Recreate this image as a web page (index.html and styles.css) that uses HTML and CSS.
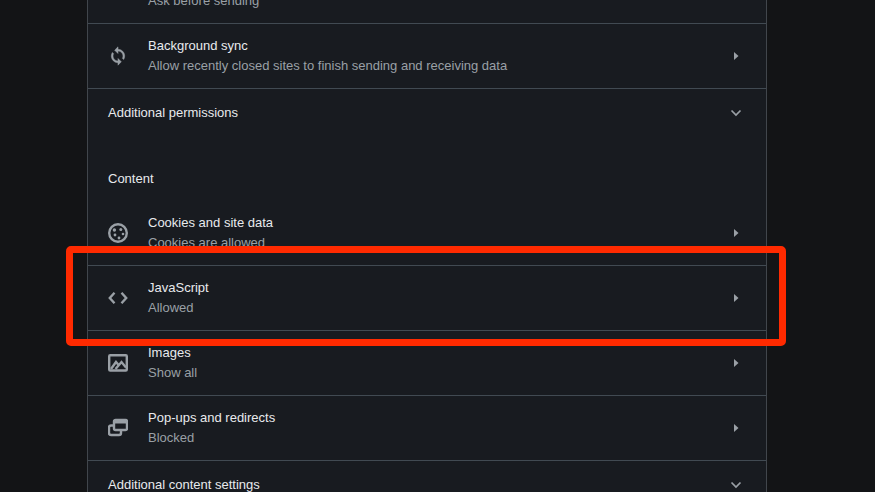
FILE: index.html
```html
<!DOCTYPE html>
<html lang="en">
<head>
    <meta charset="UTF-8">
    <meta name="viewport" content="width=device-width, initial-scale=1.0">
    <title>Site settings</title>
    <link rel="stylesheet" href="styles.css">
</head>
<body>
    <div class="panel">
        <div class="row">
            <span class="icon"></span>
            <div class="row-text">
                <div class="row-title">&nbsp;</div>
                <div class="row-sub">Ask before sending</div>
            </div>
        </div>

        <div class="row">
            <svg class="icon icon-sync" viewBox="0 0 24 24"><path d="M12 4V1L8 5l4 4V6c3.31 0 6 2.69 6 6 0 1.01-.25 1.97-.7 2.8l1.46 1.46C19.54 15.03 20 13.57 20 12c0-4.42-3.58-8-8-8zm0 14c-3.31 0-6-2.69-6-6 0-1.01.25-1.97.7-2.8L5.24 7.74C4.46 8.97 4 10.43 4 12c0 4.42 3.58 8 8 8v3l4-4-4-4v3z"/></svg>
            <div class="row-text">
                <div class="row-title">Background sync</div>
                <div class="row-sub">Allow recently closed sites to finish sending and receiving data</div>
            </div>
            <svg class="arrow" viewBox="0 0 20 20"><path d="M8 6l4.5 4L8 14z"/></svg>
        </div>

        <div class="row row-more">
            <div class="row-text">
                <div class="row-title">Additional permissions</div>
            </div>
            <svg class="chevron" viewBox="0 0 20 20"><path d="M5.5 7.5L10 12l4.5-4.5"/></svg>
        </div>

        <h2 class="heading">Content</h2>

        <div class="row">
            <svg class="icon" viewBox="0 0 20 20">
                <circle class="line" cx="10" cy="10" r="8.800"/>
                <circle cx="6.400" cy="7" r="1.700"/>
                <circle cx="12.800" cy="6.600" r="1.500"/>
                <circle cx="7" cy="12" r="1.400"/>
                <circle cx="15" cy="11" r="1.300"/>
                <circle cx="11" cy="15" r="1.400"/>
            </svg>
            <div class="row-text">
                <div class="row-title">Cookies and site data</div>
                <div class="row-sub">Cookies are allowed</div>
            </div>
            <svg class="arrow" viewBox="0 0 20 20"><path d="M8 6l4.5 4L8 14z"/></svg>
        </div>

        <div class="row">
            <svg class="icon" viewBox="0 0 20 20">
                <path class="line" d="M6.500 4.800L1.800 10l4.700 5.200M13.500 4.800L18.200 10l-4.700 5.200"/>
            </svg>
            <div class="row-text">
                <div class="row-title">JavaScript</div>
                <div class="row-sub">Allowed</div>
            </div>
            <svg class="arrow" viewBox="0 0 20 20"><path d="M8 6l4.5 4L8 14z"/></svg>
        </div>

        <div class="row">
            <svg class="icon" viewBox="0 0 20 20">
                <rect class="line" x="1.200" y="2.200" width="17.600" height="15.300" rx="1"/>
                <path class="line" d="M3 16L8 9l3.500 4M7.500 16L13.500 9l4.500 5.500"/>
            </svg>
            <div class="row-text">
                <div class="row-title">Images</div>
                <div class="row-sub">Show all</div>
            </div>
            <svg class="arrow" viewBox="0 0 20 20"><path d="M8 6l4.5 4L8 14z"/></svg>
        </div>

        <div class="row">
            <svg class="icon" viewBox="0 0 20 20">
                <path class="line" d="M5 7.500H3a2 2 0 0 0-2 2V15a2 2 0 0 0 2 2h8a2 2 0 0 0 2-2v-2"/>
                <rect class="line" x="6" y="2" width="13" height="10" rx="1.500"/>
                <rect x="6" y="2" width="13" height="3.500"/>
            </svg>
            <div class="row-text">
                <div class="row-title">Pop-ups and redirects</div>
                <div class="row-sub">Blocked</div>
            </div>
            <svg class="arrow" viewBox="0 0 20 20"><path d="M8 6l4.5 4L8 14z"/></svg>
        </div>

        <div class="row row-more">
            <div class="row-text">
                <div class="row-title">Additional content settings</div>
            </div>
            <svg class="chevron" viewBox="0 0 20 20"><path d="M5.5 7.5L10 12l4.5-4.5"/></svg>
        </div>
    </div>

    <div class="highlight"></div>
</body>
</html>
```

FILE: styles.css
```css
html, body {
    height: 492px;
    margin: 0;
    overflow: hidden;
}
body {
    position: relative;
    font-family: "Liberation Sans", Arial, sans-serif;
    font-size: 13px;
    background-color: #131416;
}
.panel {
    width: 680px;
    box-sizing: border-box;
    margin-top: -41px;
    margin-left: 87px;
    background-color: #181b20;
    border-left: 1px solid #41464c;
    border-right: 1px solid #41464c;
}
.row {
    display: flex;
    align-items: center;
    height: 64px;
    padding: 0 20px;
    border-bottom: 1px solid #414a52;
}
.row-more {
    height: 47px;
    border-bottom: none;
}
.row-more + .heading {
    margin-top: 1px;
}
.row-text {
    flex: 1;
}
.row-title {
    color: #e8eaed;
    line-height: 20px;
}
.row-sub {
    color: #9aa0a6;
    line-height: 20px;
}
.icon {
    flex: none;
    width: 20px;
    height: 20px;
    margin-right: 20px;
    fill: #9aa0a6;
}
.icon-sync {
    stroke: #9aa0a6;
    stroke-width: 0.6;
}
.line {
    fill: none;
    stroke: #9aa0a6;
    stroke-width: 2.4;
}
.arrow {
    flex: none;
    width: 20px;
    height: 20px;
    fill: #9aa0a6;
}
.chevron {
    flex: none;
    width: 20px;
    height: 20px;
    fill: none;
    stroke: #9aa0a6;
    stroke-width: 1.7;
}
.heading {
    margin: 0;
    padding: 33px 20px 14px;
    color: #e8eaed;
    font-size: 13px;
    font-weight: 400;
    line-height: 17px;
}
.highlight {
    position: absolute;
    left: 66px;
    top: 246px;
    width: 720px;
    height: 100px;
    box-sizing: border-box;
    border: 7px solid #ff2a00;
    border-radius: 5px;
}
```
